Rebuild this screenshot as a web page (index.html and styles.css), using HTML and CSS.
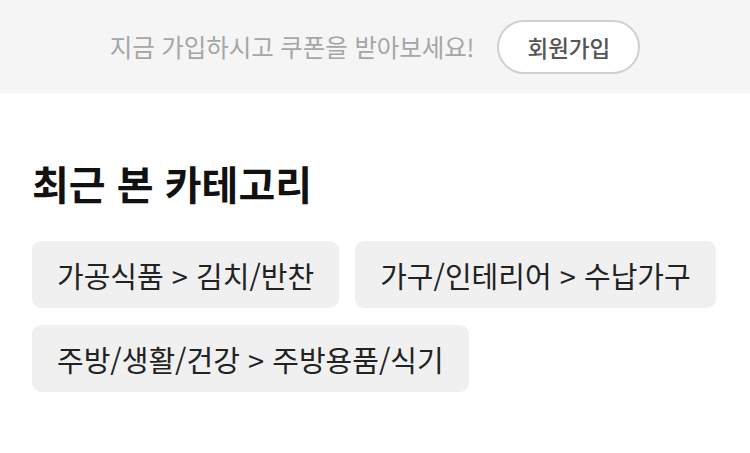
FILE: index.html
```html
<!DOCTYPE html>
<html lang="ko">
<head>
<meta charset="utf-8">
<link rel="stylesheet" href="styles.css">
</head>
<body>
<div class="banner">
  <span class="banner-text">지금 가입하시고 쿠폰을 받아보세요!</span>
  <button class="join">회원가입</button>
</div>
<section class="recent">
  <h2 class="title">최근 본 카테고리</h2>
  <div class="chips">
    <span class="chip">가공식품 &gt; 김치/반찬</span>
    <span class="chip">가구/인테리어 &gt; 수납가구</span>
    <span class="chip">주방/생활/건강 &gt; 주방용품/식기</span>
  </div>
</section>
</body>
</html>
```
FILE: styles.css
```css
* { box-sizing: border-box; }
body {
  margin: 0;
  background: #fff;
  font-family: "Noto Sans CJK KR", "Noto Sans", sans-serif;
  width: 750px;
}
.banner {
  height: 93px;
  background: #f5f5f5;
  display: flex;
  align-items: center;
  justify-content: center;
  gap: 23px;
}
.banner-text {
  font-size: 24.5px;
  color: #a6a6a6;
  letter-spacing: -0.1px;
}
.join {
  height: 54px;
  padding: 0 28px;
  border: 2px solid #cfcfcf;
  border-radius: 27px;
  background: #fff;
  font-family: inherit;
  font-size: 22.5px;
  color: #555;
  font-weight: 500;
}
.recent {
  padding: 64px 32px 0;
}
.title {
  margin: 0 0 32px;
  font-size: 40px;
  font-weight: 700;
  color: #111;
  line-height: 52px;
}
.chips {
  display: flex;
  flex-wrap: wrap;
  gap: 17px 16px;
}
.chip {
  height: 67px;
  display: inline-flex;
  align-items: center;
  padding: 0 25px;
  background: #f0f0f0;
  border-radius: 9px;
  font-size: 29px;
  color: #222;
}
```
